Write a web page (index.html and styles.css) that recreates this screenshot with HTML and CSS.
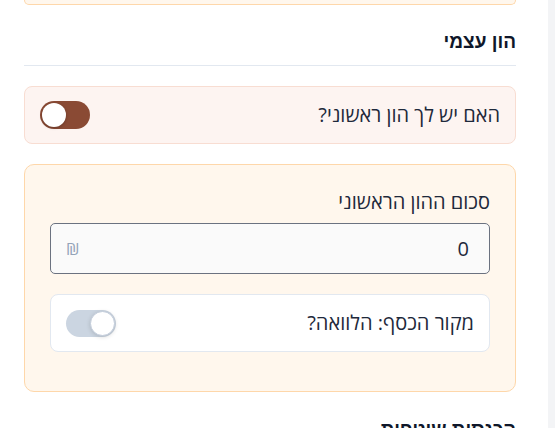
FILE: index.html
```html
<!DOCTYPE html>
<html lang="he" dir="rtl">
<head>
<meta charset="utf-8">
<link rel="stylesheet" href="styles.css">
</head>
<body>
<div class="panel">
  <div class="prev-card"></div>

  <h2 class="section-title">הון עצמי</h2>

  <div class="toggle-card">
    <span class="toggle-label">האם יש לך הון ראשוני?</span>
    <span class="switch switch-on"><span class="knob"></span></span>
  </div>

  <div class="capital-card">
    <label class="field-label">סכום ההון הראשוני</label>
    <div class="input-box">
      <span class="input-value">0</span>
      <span class="currency">₪</span>
    </div>
    <div class="inner-card">
      <span class="toggle-label">מקור הכסף: הלוואה?</span>
      <span class="switch switch-off"><span class="knob"></span></span>
    </div>
  </div>

  <h2 class="section-title next-title">הכנסות שוטפות</h2>
</div>
</body>
</html>
```

FILE: styles.css
```css
html, body {
  margin: 0;
  padding: 0;
}
body {
  background: #f3f4f6;
  font-family: "Open Sans", "DejaVu Sans", sans-serif;
  color: #1e293b;
  height: 428px;
  overflow: hidden;
}
.panel {
  width: 548px;
  box-sizing: border-box;
  background: #ffffff;
  padding: 0 32px 0 24px;
  height: 428px;
  margin: 0 auto 0 0;
}
.prev-card {
  height: 4px;
  background: #fff7ed;
  border: 1px solid #fed7aa;
  border-top: 0;
  border-radius: 0 0 10px 10px;
}
.section-title {
  margin: 23px 0 0;
  padding-bottom: 9px;
  border-bottom: 1px solid #e2e8f0;
  font-family: "Liberation Sans", "DejaVu Sans", sans-serif;
  font-weight: 700;
  font-size: 19px;
  line-height: 28px;
  color: #0f172a;
}
.next-title {
  margin-top: 24px;
}
.toggle-card {
  margin-top: 20px;
  display: flex;
  align-items: center;
  justify-content: space-between;
  padding: 14px 15px;
  background: #fdf4f1;
  border: 1px solid #f8ddd2;
  border-radius: 8px;
}
.toggle-label {
  font-size: 20px;
  line-height: 28px;
  color: #1e293b;
}
.switch {
  position: relative;
  display: block;
  width: 50px;
  height: 28px;
  border-radius: 14px;
  flex: none;
}
.switch-on {
  background: #8a4a34;
}
.switch-off {
  background: #cbd5e1;
  height: 27px;
}
.knob {
  position: absolute;
  top: 2px;
  width: 24px;
  height: 24px;
  border-radius: 50%;
  background: #ffffff;
  box-shadow: 0 1px 3px rgba(0,0,0,0.25);
}
.switch-on .knob {
  left: 2px;
}
.switch-off .knob {
  top: 1px;
  right: 1px;
  width: 23px;
  height: 23px;
  border: 1px solid #c3cddb;
  box-shadow: 0 1px 4px rgba(0,0,0,0.15);
}
.capital-card {
  margin-top: 20px;
  padding: 22px 25px 39px;
  background: #fff7ed;
  border: 1px solid #fed7aa;
  border-radius: 10px;
}
.field-label {
  display: block;
  font-size: 20px;
  line-height: 30px;
  color: #1e293b;
  margin-bottom: 6px;
}
.input-box {
  display: flex;
  align-items: center;
  justify-content: space-between;
  height: 49px;
  padding: 0 20px 0 15px;
  background: #fafafa;
  border: 1px solid #6b7280;
  border-radius: 5px;
}
.input-value {
  font-size: 20px;
  color: #1e293b;
}
.currency {
  font-size: 17px;
  color: #94a3b8;
}
.inner-card {
  margin-top: 20px;
  display: flex;
  align-items: center;
  justify-content: space-between;
  padding: 14px 15px;
  background: #ffffff;
  border: 1px solid #e2e8f0;
  border-radius: 8px;
}
```
